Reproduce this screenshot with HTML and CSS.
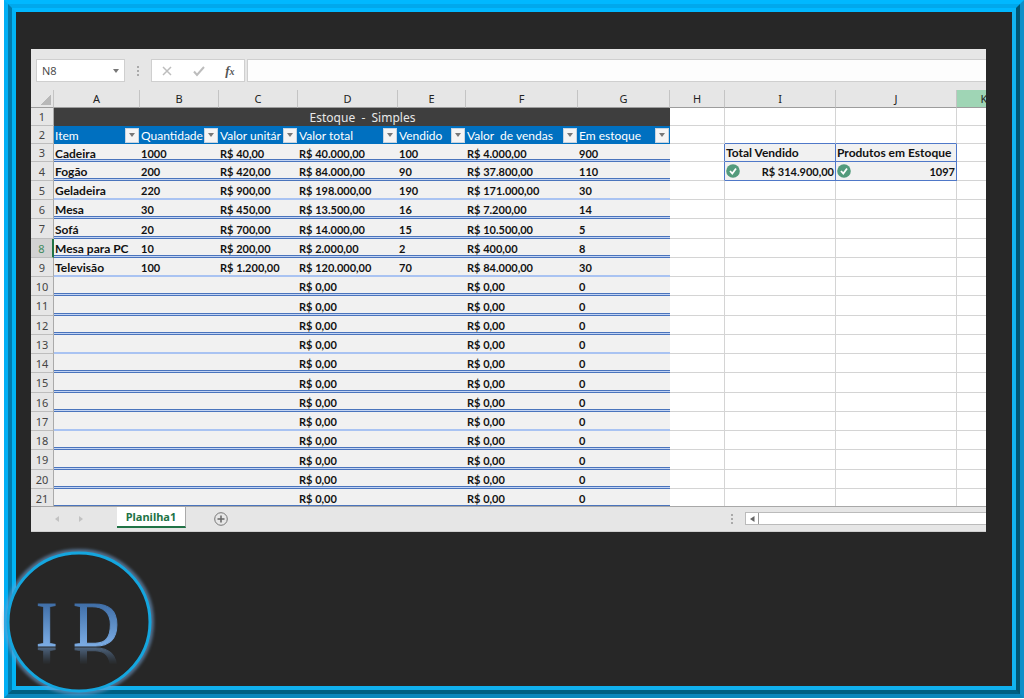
FILE: index.html
```html
<!DOCTYPE html>
<html lang="pt-BR">
<head>
<meta charset="utf-8">
<title>Estoque - Simples</title>
<link rel="stylesheet" href="styles.css">
</head>
<body>
<div class="frame"><div class="frame-mid"><main class="frame-inner">
<section class="excel">
  <div class="formula-bar">
    <button class="name-box" type="button"><span>N8</span><i class="caret"></i></button>
    <span class="dots"><i></i><i></i><i></i></span>
    <div class="tools">
      <button type="button" aria-label="Cancelar"><svg width="12" height="12" viewBox="0 0 12 12"><path d="M2 2l8 8M10 2l-8 8" fill="none" stroke="#bdbdbd" stroke-width="1.5"/></svg></button>
      <button type="button" aria-label="Inserir"><svg width="14" height="12" viewBox="0 0 14 12"><path d="M2 6.500l3 3.500 7-8" fill="none" stroke="#bdbdbd" stroke-width="2"/></svg></button>
      <button type="button" class="fx" aria-label="Inserir função">f<small>x</small></button>
    </div>
    <input class="formula" type="text" aria-label="Barra de fórmulas">
  </div>
  <div class="grid">
    <table id="sheet">
      <colgroup><col class="c-row"><col class="c-a"><col class="c-b"><col class="c-b"><col class="c-d"><col class="c-e"><col class="c-f"><col class="c-g"><col class="c-h"><col class="c-i"><col class="c-j"><col class="c-k"></colgroup>
      <thead><tr><th class="corner"></th><th>A</th><th>B</th><th>C</th><th>D</th><th>E</th><th>F</th><th>G</th><th>H</th><th>I</th><th>J</th><th class="selected">K</th></tr></thead>
      <tbody></tbody>
    </table>
  </div>
  <div class="tabs">
    <div class="tab-nav"><button type="button" aria-label="Anterior"><svg width="6" height="8" viewBox="0 0 6 8"><path d="M5 1v6L1 4z" fill="#c2c2c2"/></svg></button><button type="button" aria-label="Próxima"><svg width="6" height="8" viewBox="0 0 6 8"><path d="M1 1v6l4-3z" fill="#c2c2c2"/></svg></button></div>
    <button class="tab" type="button">Planilha1</button>
    <button class="add" type="button" aria-label="Nova planilha"><svg width="14" height="14" viewBox="0 0 14 14"><circle cx="7" cy="7" r="6.300" fill="none" stroke="#777"/><path d="M7 3.500v7M3.500 7h7" stroke="#666" stroke-width="1.500"/></svg></button>
    <span class="dots split"><i></i><i></i><i></i></span>
    <div class="scroll"><button type="button" aria-label="Rolar para a esquerda"><svg width="5" height="6" viewBox="0 0 5 6"><path d="M4.500 0v6L0 3z" fill="#666"/></svg></button></div>
  </div>
</section>
</main></div></div>
<div class="logo">
  <svg class="ring" viewBox="0 0 160 160" aria-hidden="true">
    <defs><filter id="glow" x="-20%" y="-20%" width="140%" height="140%"><feGaussianBlur stdDeviation="1.5"/></filter></defs>
    <ellipse cx="80" cy="81" rx="72" ry="70" fill="none" stroke="#6f9dce" stroke-width="6" opacity="0.6" filter="url(#glow)"/>
    <ellipse cx="80" cy="81" rx="71" ry="69" fill="#272727" stroke="#14a6df" stroke-width="3"/>
  </svg>
  <span class="letters">I D</span>
</div>
<script src="sheet.js"></script>
</body>
</html>
```
FILE: styles.css
```css
* { box-sizing: border-box; }
body { margin: 0; min-height: 100vh; display: flex; position: relative; background: #fff; font-family: Lato, "Open Sans", sans-serif; padding: 0 0 1px 4px; }
button { border: 0; padding: 0; background: none; font: inherit; color: inherit; }
svg { display: block; }
.frame, .frame-mid { flex: 1; display: flex; min-width: 0; }
.frame { border: 4px solid; border-color: #00b8ff #0e8fc8 #0b86bb #00aff5; }
.frame-mid { border: 4px solid; border-color: #00a8ec #005674 #005f82 #007db0; }
.frame-inner { flex: 1; min-width: 0; border: 4px solid; border-color: #00b8ff #12b4f0 #10b0ee #00b4f5; background: #272727; padding: 37px 26px 0 15px; }
.excel { background: #e6e6e6; overflow: hidden; }
.formula-bar { display: flex; height: 41px; padding: 10px 0 8px 5px; }
.name-box { width: 89px; border: 1px solid #cfcfcf; background: #fff; display: flex; align-items: center; justify-content: space-between; padding: 0 5px; font: 11px "Open Sans", sans-serif; color: #444; }
.caret { border: 3px solid transparent; border-top: 4px solid #777; border-bottom: 0; }
.dots { width: 26px; display: flex; flex-direction: column; align-items: center; justify-content: center; gap: 2px; }
.dots i { width: 2px; height: 2px; background: #aaa; }
.tools { display: flex; justify-content: space-around; align-items: center; width: 94px; background: #fff; border: 1px solid #cfcfcf; margin-right: 2px; }
.fx { font: italic bold 13px "Liberation Serif", serif; color: #555; }
.fx small { font-size: 10px; }
.formula { flex: 1; min-width: 0; border: 1px solid #cfcfcf; border-right: 0; background: #fdfdfd; padding: 0 6px; }
.grid { height: 416px; overflow: hidden; background: #fff; }
table { width: 981px; table-layout: fixed; border-collapse: separate; border-spacing: 0; }
.c-row { width: 23px; } .c-a { width: 86px; } .c-b { width: 79px; } .c-d { width: 100px; } .c-e { width: 68px; } .c-f { width: 112px; } .c-g { width: 92px; } .c-h { width: 55px; } .c-i { width: 111px; } .c-j { width: 121px; } .c-k { width: 55px; }
th, td { padding: 0; height: 19px; line-height: 15px; overflow: hidden; white-space: nowrap; text-align: left; }
thead th { height: 18px; background: #e6e6e6; border-right: 1px solid #c4c4c4; border-bottom: 1px solid #9c9c9c; text-align: center; font: 11px/17px "Noto Sans", sans-serif; color: #222; }
thead .selected { background: #9fd5b5; }
.corner { background: linear-gradient(135deg, transparent 50%, #b8b8b8 50%) 9px 4px / 11px 11px no-repeat #e6e6e6; }
tbody th { background: #e6e6e6; border-right: 1px solid #aaa; border-bottom: 1px solid #bdbdbd; text-align: center; font: 11px/15px "Noto Sans", sans-serif; color: #444; }
tbody td { border-right: 1px solid #d4d4d4; border-bottom: 1px solid #d4d4d4; font-size: 12px; font-weight: 700; color: #111; padding-left: 1px; }
.short > * { height: 18px; }
.tall > * { height: 20px; }
td.title { background: #3e3e3e; color: #e8e8e8; text-align: center; font: 12px/17px "Noto Sans", sans-serif; border: 0; }
td.head { background: #0070c0; color: #fff; font: 12px/17px Lato, sans-serif; border: 0; }
.head div { display: flex; align-items: center; justify-content: space-between; }
.filter { flex: none; width: 14px; height: 15px; background: #f4f4f4; display: grid; place-items: center; margin-right: 1px; border: 1px solid #c8d4e0; }
td.cell { background: linear-gradient(#4a74bc 0 1px, #c3d4f3 1px 2px, #4a74bc 2px) 0 100% / 100% 3px no-repeat #f1f1f1; border: 0; }
.soft td.cell { background: linear-gradient(#a9c3f2, #a9c3f2) 0 100% / 100% 2px no-repeat #f1f1f1; }
td.number { font-size: 11px; }
th.active { background: #d2d2d2; color: #3f8a5f; border-right: 2px solid #217346; }
td.box { background: #f1f1f1; border-color: #4f78c8; }
.box div { display: flex; align-items: center; justify-content: space-between; padding-right: 1px; }
td.over { border-bottom-color: #4f78c8; }
td.beside { border-right-color: #4f78c8; }
.tabs { display: flex; height: 26px; border-top: 1px solid #a8a8a8; border-bottom: 1px solid #cfcfcf; }
.tab-nav { width: 86px; display: flex; align-items: center; gap: 18px; padding-left: 23px; }
.tab { width: 69px; height: 21px; background: #fff; border-bottom: 2px solid #217346; border-right: 1px solid #aaa; color: #217346; font: bold 11px/19px "Noto Sans", sans-serif; }
.add { margin-left: 28px; }
.split { margin-left: auto; }
.scroll { width: 241px; height: 13px; margin: 5px 0 0; background: #fff; border: 1px solid #bbb; border-right: 0; }
.scroll button { width: 13px; height: 11px; display: grid; place-items: center; border-right: 1px solid #999; }
.logo { position: absolute; left: -1px; bottom: -2px; width: 160px; height: 160px; padding: 61px 0 0 37px; }
.ring { position: absolute; inset: 0; }
.letters { position: relative; display: block; width: 90px; height: 46px; font: 64px/46px "Liberation Serif", serif; color: transparent; -webkit-text-stroke: 1px transparent; background: linear-gradient(#3d6ca5, #7fb0e8); -webkit-background-clip: text; background-clip: text; -webkit-box-reflect: below -2px linear-gradient(transparent 60%, rgba(0, 0, 0, 0.5)); }
```
FILE: sheet.js
```js
const items = [
  ["Cadeira", "1000", "R$ 40,00", "R$ 40.000,00", "100", "R$ 4.000,00", "900"],
  ["Fogão", "200", "R$ 420,00", "R$ 84.000,00", "90", "R$ 37.800,00", "110"],
  ["Geladeira", "220", "R$ 900,00", "R$ 198.000,00", "190", "R$ 171.000,00", "30"],
  ["Mesa", "30", "R$ 450,00", "R$ 13.500,00", "16", "R$ 7.200,00", "14"],
  ["Sofá", "20", "R$ 700,00", "R$ 14.000,00", "15", "R$ 10.500,00", "5"],
  ["Mesa para PC", "10", "R$ 200,00", "R$ 2.000,00", "2", "R$ 400,00", "8"],
  ["Televisão", "100", "R$ 1.200,00", "R$ 120.000,00", "70", "R$ 84.000,00", "30"]
];
const empty = ["", "", "", "R$ 0,00", "", "R$ 0,00", "0"];
const heads = ["Item", "Quantidade", "Valor unitár", "Valor total", "Vendido", "Valor&nbsp; de vendas", "Em estoque"];
const check = '<svg width="14" height="14" viewBox="0 0 14 14"><circle cx="7" cy="7" r="6.8" fill="#539b7c"/><path d="M4 7l2.300 2.500L10 4.500" fill="none" stroke="#fff" stroke-width="1.800"/></svg>';
const soft = [5, 9, 13, 17];
const tall = [7, 11, 15, 19];

function side(r) {
  if (r === 2) return '<td></td><td class="over"></td><td class="over"></td><td></td>';
  if (r === 3) return '<td class="beside"></td><td class="box">Total Vendido</td><td class="box">Produtos em Estoque</td><td></td>';
  if (r === 4) return `<td class="beside"></td><td class="box number"><div>${check}<span>R$ 314.900,00</span></div></td><td class="box number"><div>${check}<span>1097</span></div></td><td></td>`;
  return "<td></td><td></td><td></td><td></td>";
}

let html = "";
for (let r = 1; r <= 21; r++) {
  let cells;
  if (r === 1) cells = '<td class="title" colspan="7">Estoque&nbsp; -&nbsp; Simples</td>';
  else if (r === 2) cells = heads.map(h => `<td class="head"><div><span>${h}</span><button class="filter" type="button" aria-label="Filtrar"><i class="caret"></i></button></div></td>`).join("");
  else cells = (items[r - 3] || empty).map((v, i) => `<td class="cell${i ? " number" : ""}">${v}</td>`).join("");
  const kind = [r < 4 ? "short" : "", soft.includes(r) ? "soft" : "", tall.includes(r) ? "tall" : ""].join(" ").trim();
  html += `<tr class="${kind}"><th${r === 8 ? ' class="active"' : ""}>${r}</th>${cells}${side(r)}</tr>`;
}
document.querySelector("#sheet tbody").innerHTML = html;
```
